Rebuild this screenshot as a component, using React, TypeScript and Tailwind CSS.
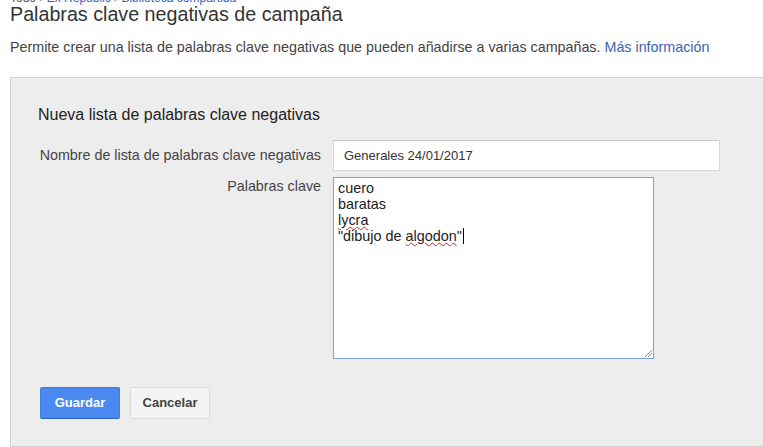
import React from "react";

export default function App() {
  return (
    <div className="w-[763px] h-[447px] overflow-hidden bg-white" style={{ fontFamily: '"Liberation Sans", Arial, sans-serif' }}>
      <div className="pl-[10px]">
        <div className="mt-[-9px] h-[12px] leading-[14px] text-[12px] text-[#555] whitespace-nowrap">
          Todo <span className="text-[#777]">›</span> <span className="text-[#3b63b5]">Ex Republic</span> <span className="text-[#777]">›</span> <span className="text-[#3b63b5]">Biblioteca compartida</span>
        </div>
        <h1 className="text-[19.7px] leading-[23px] text-[#333] font-normal">Palabras clave negativas de campaña</h1>
        <p className="mt-[11px] text-[14.3px] leading-[20px] text-[#444]">
          Permite crear una lista de palabras clave negativas que pueden añadirse a varias campañas.{" "}
          <span className="text-[#3b63b5]">Más información</span>
        </p>
      </div>
      <div className="ml-[10px] mt-[20px] border-t border-l border-b border-[#d2d2d2] bg-[#ededed] pt-[26px] pl-[27px] pb-[27px]">
        <h2 className="text-[16px] leading-[21px] text-[#222] font-normal">Nueva lista de palabras clave negativas</h2>
        <div className="mt-[15px] flex items-center gap-[12px]">
          <div className="w-[283px] text-right text-[14.3px] text-[#444]">Nombre de lista de palabras clave negativas</div>
          <div className="w-[387px] h-[31px] bg-white border border-[#d6d6d6] border-t-[#c6c6c6] pl-[10px] flex items-center text-[13px] text-[#333]">
            Generales 24/01/2017
          </div>
        </div>
        <div className="mt-[6px] flex items-start gap-[12px]">
          <div className="w-[283px] text-right text-[14.3px] text-[#444] leading-[16px] pt-[1px]">Palabras clave</div>
          <div className="relative w-[321px] h-[182px] bg-white border border-[#7ba1e0] pl-[4px] pt-[2px] text-[14.4px] leading-[16px] text-[#222]">
            <div>cuero</div>
            <div>baratas</div>
            <div>
              <span className="underline decoration-wavy decoration-[#e02020] decoration-[1px] underline-offset-[1px]">lycra</span>
            </div>
            <div className="flex items-center">
              <span>
                "dibujo de{" "}
                <span className="underline decoration-wavy decoration-[#e02020] decoration-[1px] underline-offset-[1px]">algodon</span>"
              </span>
              <span className="ml-[1px] inline-block w-[1px] h-[16px] bg-black" />
            </div>
            <svg className="absolute right-[1px] bottom-[1px]" width="8" height="8" viewBox="0 0 8 8">
              <line x1="1" y1="8" x2="8" y2="1" stroke="#888" strokeWidth="1" />
              <line x1="4" y1="8" x2="8" y2="4" stroke="#888" strokeWidth="1" />
            </svg>
          </div>
        </div>
        <div className="mt-[28px] ml-[2px] flex gap-[10px]">
          <button className="w-[80px] h-[32px] rounded-[2px] bg-[#4a8af0] border border-[#3d7ee6] border-b-[#2a62c4] text-white text-[13px] font-bold">
            Guardar
          </button>
          <button className="w-[80px] h-[32px] rounded-[2px] bg-[#f4f4f4] border border-[#dcdcdc] text-[#444] text-[13px] font-bold">
            Cancelar
          </button>
        </div>
      </div>
    </div>
  );
}
